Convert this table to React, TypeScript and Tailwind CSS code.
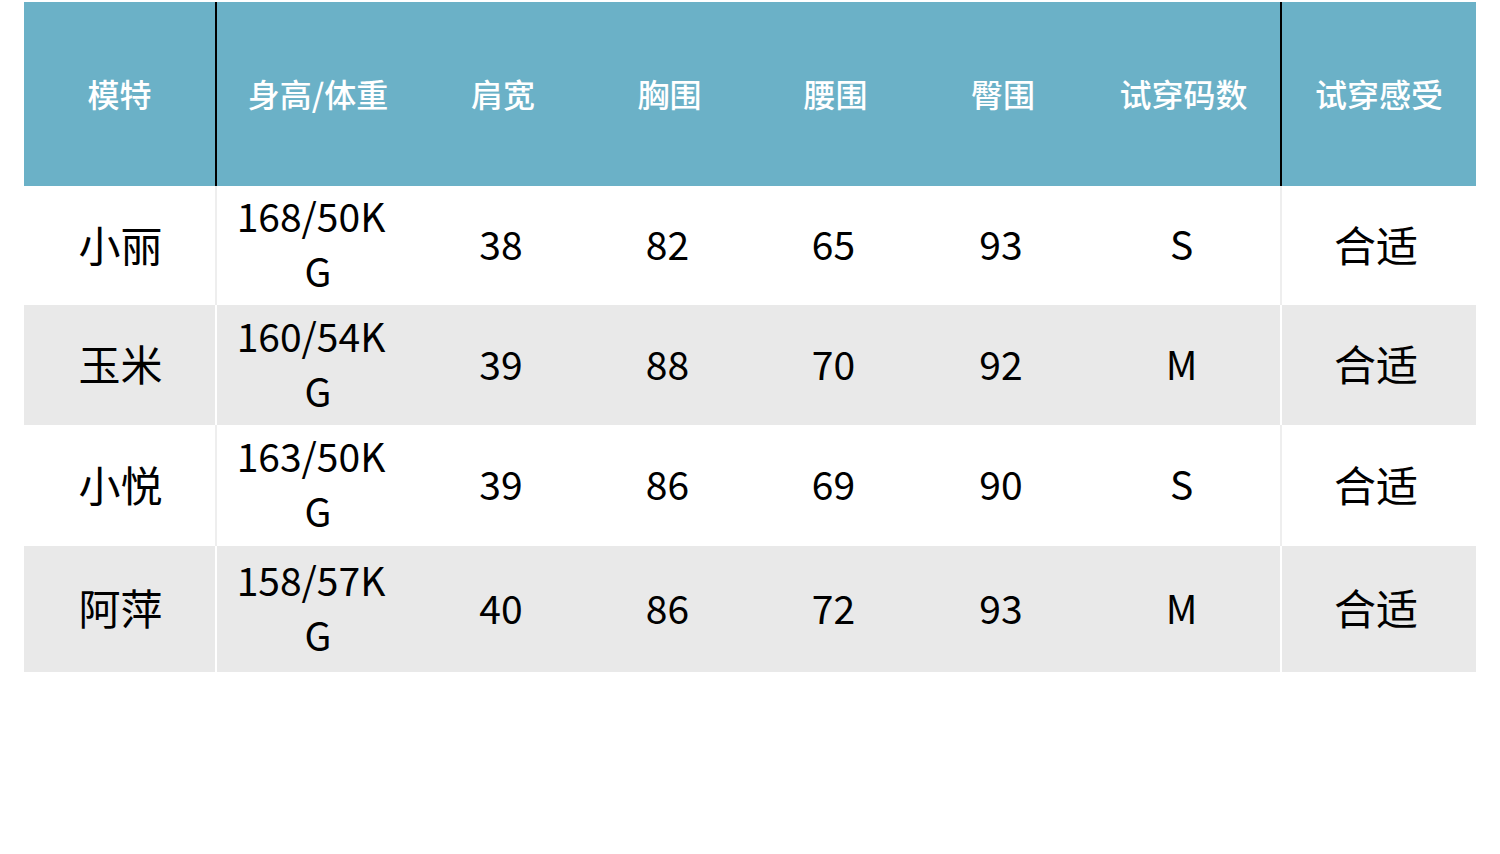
import React from "react";

const headers = ["身高/体重", "肩宽", "胸围", "腰围", "臀围", "试穿码数"];
const midWidths = ["w-[202px]", "w-[168px]", "w-[165px]", "w-[167px]", "w-[168px]", "w-[193px]"];

const rows = [
  { name: "小丽", h: "168/50K", v: ["38", "82", "65", "93", "S"], feel: "合适", gray: false, height: "h-[119px]" },
  { name: "玉米", h: "160/54K", v: ["39", "88", "70", "92", "M"], feel: "合适", gray: true, height: "h-[120px]" },
  { name: "小悦", h: "163/50K", v: ["39", "86", "69", "90", "S"], feel: "合适", gray: false, height: "h-[121px]" },
  { name: "阿萍", h: "158/57K", v: ["40", "86", "72", "93", "M"], feel: "合适", gray: true, height: "h-[126px]" },
];

const font = { fontFamily: '"Noto Sans CJK SC", "Noto Sans", sans-serif' };

export default function App() {
  return (
    <div className="w-[1500px] h-[854px] bg-white pt-[2px] pl-[24px]" style={font}>
      <div className="w-[1452px] flex flex-col">
        {/* header */}
        <div className="flex h-[184px] bg-[#6bb1c7] text-white text-[32px] font-medium">
          <div className="w-[191px] flex items-center justify-center pb-[2px]">模特</div>
          <div className="w-[2px] bg-black" />
          {headers.map((t, i) => (
            <div key={t} className={`${midWidths[i]} flex items-center justify-center pb-[2px]`}>
              {t}
            </div>
          ))}
          <div className="w-[2px] bg-black" />
          <div className="w-[194px] flex items-center justify-center pb-[2px]">试穿感受</div>
        </div>
        {rows.map((r) => (
          <div
            key={r.name}
            className={`flex ${r.height} text-black text-[39px] leading-none ${r.gray ? "bg-[#e9e9e9]" : "bg-white"}`}
          >
            <div className="w-[191px] flex items-center justify-center text-[42px] pb-[4px] pl-[2px]">{r.name}</div>
            <div className={`w-[2px] ${r.gray ? "bg-white" : "bg-[#eeeeee]"}`} />
            <div className={`${midWidths[0]} flex flex-col items-center justify-center leading-[55px] text-center pb-[5px]`}>
              <span className="pr-[14px]">{r.h}</span>
              <span>G</span>
            </div>
            {r.v.map((val, i) => (
              <div key={i} className={`${midWidths[i + 1]} flex items-center justify-center pr-[4px] pb-[4px]`}>
                {val}
              </div>
            ))}
            <div className={`w-[2px] ${r.gray ? "bg-white" : "bg-[#eeeeee]"}`} />
            <div className="w-[194px] flex items-center justify-center text-[42px] pb-[4px] pr-[6px]">{r.feel}</div>
          </div>
        ))}
      </div>
    </div>
  );
}
